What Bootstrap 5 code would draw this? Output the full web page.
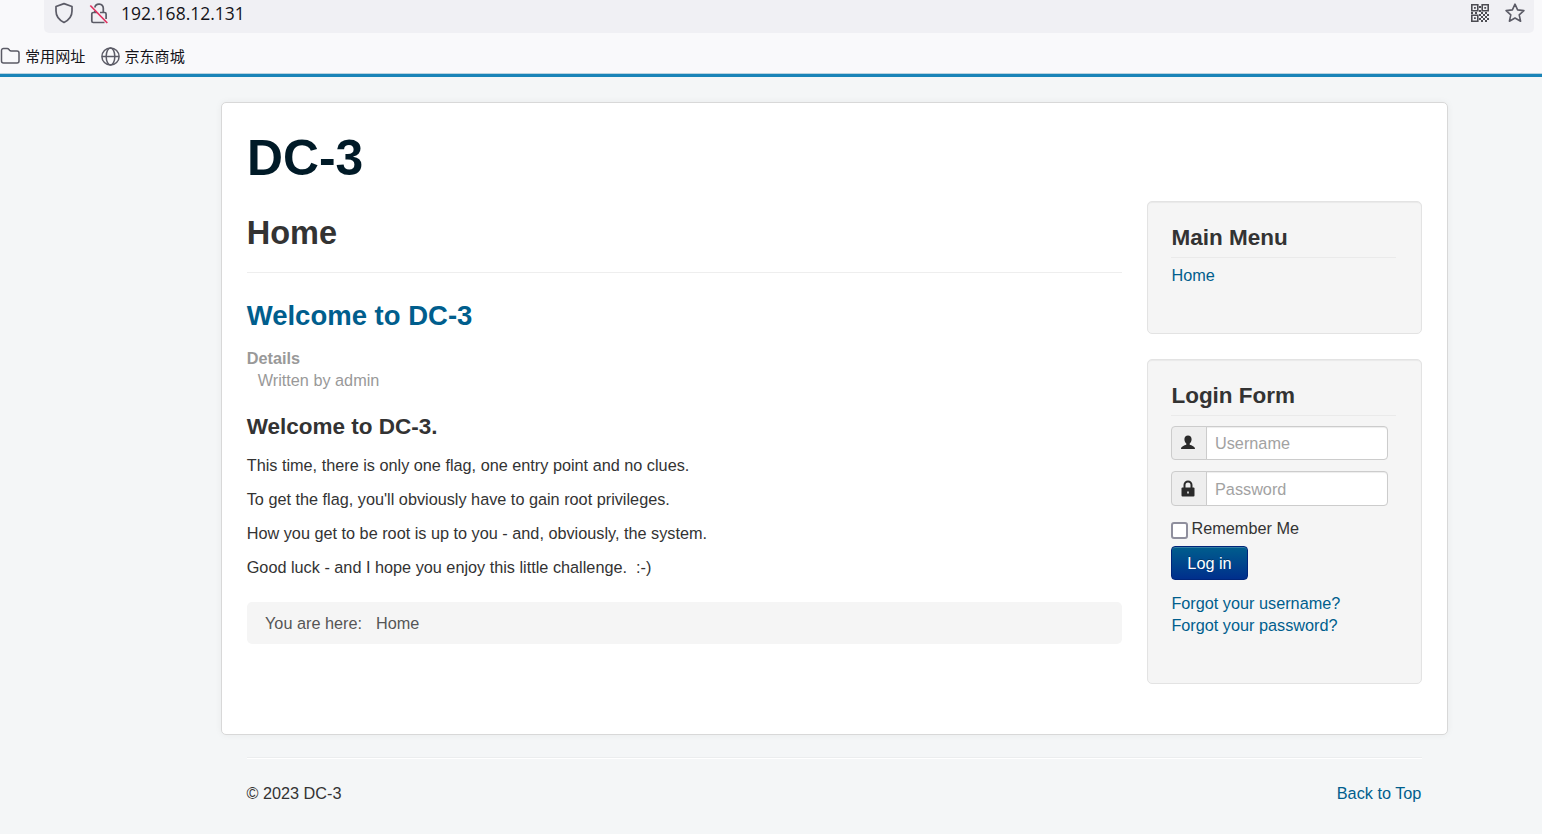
<!DOCTYPE html>
<html lang="en">
<head>
<meta charset="utf-8">
<title>Home</title>
<link href="https://cdn.jsdelivr.net/npm/bootstrap@5.3.0/dist/css/bootstrap.min.css" rel="stylesheet">
<script src="https://cdn.jsdelivr.net/npm/bootstrap@5.3.0/dist/js/bootstrap.bundle.min.js"></script>
<style>
body{background:#f4f6f7;color:#333;font-family:"Liberation Sans",Arial,sans-serif;font-size:16.25px;line-height:22px;height:834px;overflow:hidden}
a{color:#005e8d;text-decoration:none}
svg{display:block;flex:none}
h1,h2,h3,p{margin:0}
.chrome{background:#f9f9fb;height:73px;font-family:"Noto Sans","Noto Sans CJK SC",sans-serif;color:#15141a}
.urlbar{height:33px;margin-left:44px;margin-right:8px;background:#f0f0f4;border-radius:0 0 5px 5px;padding:0 9px 7px 10px}
.address{font-family:"Open Sans","Noto Sans",sans-serif;font-size:17.5px;margin-left:12px}
.bookmarks{height:40px;padding-top:6px;font-family:"Noto Sans CJK SC",sans-serif;font-size:15.1px}
.bookmarks span{padding-bottom:3px}
.accent-line{height:4px;background:#1a84b8;border-top:1px solid #b9d3e0}
.sheet{width:1227px;height:633px;margin:25px 0 0 221px;padding:25px;background:#fff;border:1px solid #d8d8d8;border-radius:5px;box-shadow:0 0 7px rgba(0,0,0,.05)}
.site-title{font-size:49.8px;font-weight:700;line-height:60px;height:73px;color:#001a27}
.main-col{width:875px}
.main-col h2,.main-col h3,.main-col p,.meta{text-indent:-.3px}
.side-col{width:275px}
.page-title{font-size:32.5px;font-weight:700;line-height:64px;height:72px;border-bottom:1px solid #eee}
.item-title{font-size:27.5px;font-weight:700;line-height:34px;margin-top:26px}
.sub-title{font-size:22.5px;font-weight:700;line-height:30px}
.meta{color:#999;margin-top:14px}
.copy{margin-top:12px;gap:12px}
.trail{height:42px;margin-top:24px;padding:0 18px;background:#f5f5f5;border-radius:5px;color:#555}
.well-box{background:#f5f5f5;border:1px solid #e3e3e3;border-radius:5px;box-shadow:inset 0 1px 1px rgba(0,0,0,.05);padding:20px 25px 20px 23px}
.well-box h3,.well-box a{text-indent:.4px}
.well-box h3{border-bottom:1px solid #eaeaea;height:36px;line-height:32px}
.field{width:217px;height:34px}
.field .input-group-text{width:36px;padding:0 3px 0 0;justify-content:center;background:#eee;border:1px solid #ccc;border-radius:4px}
.field .form-control{height:100%;padding:0 8px;font-size:16.25px;border:1px solid #ccc;border-radius:4px;box-shadow:inset 0 1px 1px rgba(0,0,0,.075)}
.field .form-control::placeholder{color:#a2a2a2}
.tick{appearance:none;width:17px;height:17px;margin:5px 3.500px 0 0;background:#fff;border:2px solid #8f8f9d;border-radius:3px}
.login{width:77px;height:34px;padding:0;font-size:16.25px;line-height:32px;color:#fff;border:1px solid #00257a;border-radius:4px;background:linear-gradient(#005e8d,#002f8c);box-shadow:inset 0 1px 0 rgba(255,255,255,.2);text-shadow:0 -1px 0 rgba(0,0,0,.25)}
.foot{width:1175px;margin:22px 0 0 247px;border-top:1px solid #ebedee;box-shadow:inset 0 1px 0 #fff;padding:24px .6px 0 0}
.foot span{margin-left:-.6px}
</style>
</head>
<body>
<div class="chrome">
  <div class="urlbar d-flex align-items-center">
    <svg width="20" height="22" viewBox="0 0 20 22" fill="none" stroke="#5b5b66" stroke-width="1.7" stroke-linejoin="round"><path d="M10 1.600 18 4.500V9C18 14 15 18 10 20.400 5 18 2 14 2 9V4.500Z"/></svg>
    <svg style="margin-left:15px" width="20" height="22" viewBox="0 0 20 22" fill="none" stroke="#5b5b66" stroke-width="1.700"><path d="M5.800 5.500a4.300 4.300 0 0 1 8.500.7v4.300M11 10.500h4.600a1.500 1.500 0 0 1 1.500 1.500v5M5.800 9v1.500M8 10.500H4.300A1.500 1.500 0 0 0 2.800 12v7a1.500 1.500 0 0 0 1.500 1.500H15.500"/><path d="M1.300 3.500 18.300 21" stroke="#e2315f" stroke-width="1.700"/></svg>
    <span class="address">192.168.12.131</span>
    <svg class="ms-auto" width="18" height="18" viewBox="0 0 18 18" fill="none" stroke="#4c4c52" stroke-width="1.600"><path d="M.8.8h6v6h-6ZM11.200.8h6v6h-6ZM.8 11.200h6v6h-6Z"/><g fill="#4c4c52" stroke="none"><path d="M3 3h1.800v1.800H3ZM13.300 3h1.800v1.800h-1.800ZM3 13.300h1.800v1.800H3ZM8 2h2v2H8ZM8 6h2v2H8ZM0 8h2v2H0ZM4 8h2v2H4ZM8 10h2v2H8ZM10 8h2v2h-2ZM14 8h2v2h-2ZM12 10h2v2h-2ZM16 10h2v2h-2ZM10 12h2v2h-2ZM14 12h2v2h-2ZM8 14h2v2H8ZM12 14h2v2h-2ZM16 14h2v2h-2ZM10 16h2v2h-2ZM14 16h2v2h-2Z"/></g></svg>
    <svg style="margin-left:16px" width="20" height="20" viewBox="0 0 20 20" fill="none" stroke="#5b5b66" stroke-width="1.600" stroke-linejoin="round"><path d="m10 1.200 2.600 5.700 6.300.7-4.700 4.200 1.400 6.400L10 15l-5.600 3.200 1.400-6.400L1.100 7.600l6.300-.7Z"/></svg>
  </div>
  <div class="bookmarks d-flex align-items-center">
    <svg width="20" height="18" viewBox="0 0 20 18" fill="none" stroke="#5b5b66" stroke-width="1.500"><path d="M1.500 14V3.500a2 2 0 0 1 2-2h3.700q1 0 1.600.8l.8 1q.6.700 1.600.7H17a2 2 0 0 1 2 2v8a2 2 0 0 1-2 2H3.500a2 2 0 0 1-2-2Z"/></svg>
    <span style="margin-left:5px">常用网址</span>
    <svg class="ms-3" width="19" height="19" viewBox="0 0 19 19" fill="none" stroke="#5b5b66" stroke-width="1.500"><circle cx="9.500" cy="9.500" r="8.600"/><ellipse cx="9.500" cy="9.500" rx="4.300" ry="8.600"/><path d="M1 9.500h17"/></svg>
    <span class="ms-1">京东商城</span>
  </div>
</div>
<div class="accent-line"></div>

<main class="sheet">
  <h1 class="site-title">DC-3</h1>
  <div class="d-flex justify-content-between align-items-start">
    <section class="main-col">
      <h2 class="page-title">Home</h2>
      <h2 class="item-title"><a href="#">Welcome to DC-3</a></h2>
      <div class="meta"><strong>Details</strong><div style="margin-left:11px">Written by admin</div></div>
      <h3 class="sub-title" style="margin-top:21px">Welcome to DC-3.</h3>
      <div class="copy d-flex flex-column">
        <p>This time, there is only one flag, one entry point and no clues.</p>
        <p>To get the flag, you'll obviously have to gain root privileges.</p>
        <p>How you get to be root is up to you - and, obviously, the system.</p>
        <p>Good luck - and I hope you enjoy this little challenge.&nbsp; :-)</p>
      </div>
      <div class="trail d-flex align-items-center"><span>You are here:</span><span style="margin-left:14px">Home</span></div>
    </section>
    <aside class="side-col d-flex flex-column">
      <div class="well-box" style="height:133px;margin-bottom:25px">
        <h3 class="sub-title">Main Menu</h3>
        <div style="margin-top:6px"><a class="d-block" href="#">Home</a></div>
      </div>
      <form class="well-box" style="height:325px">
        <h3 class="sub-title">Login Form</h3>
        <div class="field input-group flex-nowrap" style="margin-top:10px">
          <span class="input-group-text"><svg width="16" height="15" viewBox="0 0 16 15" fill="#2a2a2a" style="margin-bottom:2px"><path d="M8 .5c2.200 0 3.600 1.400 3.600 3.700 0 1.800-.8 3.400-1.900 4.300v1.300c2 .7 5.300 1.600 5.300 4.200H1c0-2.600 3.300-3.500 5.300-4.200V8.500C5.200 7.600 4.400 6 4.400 4.200 4.400 1.900 5.800.5 8 .5Z"/></svg></span>
          <input class="form-control" type="text" placeholder="Username">
        </div>
        <div class="field input-group flex-nowrap" style="margin-top:11px;height:35px">
          <span class="input-group-text"><svg width="14" height="17" viewBox="0 0 14 17"><path d="M3.500 8V5a3.500 3.500 0 0 1 7 0v3" fill="none" stroke="#2a2a2a" stroke-width="2"/><rect x=".5" y="7.500" width="13" height="9" rx="1" fill="#2a2a2a"/><path d="M6.200 11.500h1.600v2H6.200Z" fill="#eee"/></svg></span>
          <input class="form-control" type="password" placeholder="Password" style="padding-top:2px">
        </div>
        <label class="d-flex" style="margin-top:11px;height:29px"><input class="tick" type="checkbox">Remember Me</label>
        <button class="btn login d-block" type="button">Log in</button>
        <div style="margin-top:12px"><a class="d-block" href="#">Forgot your username?</a><a class="d-block" href="#">Forgot your password?</a></div>
      </form>
    </aside>
  </div>
</main>
<footer class="foot d-flex justify-content-between">
  <span>© 2023 DC-3</span><a href="#">Back to Top</a>
</footer>
</body>
</html>
